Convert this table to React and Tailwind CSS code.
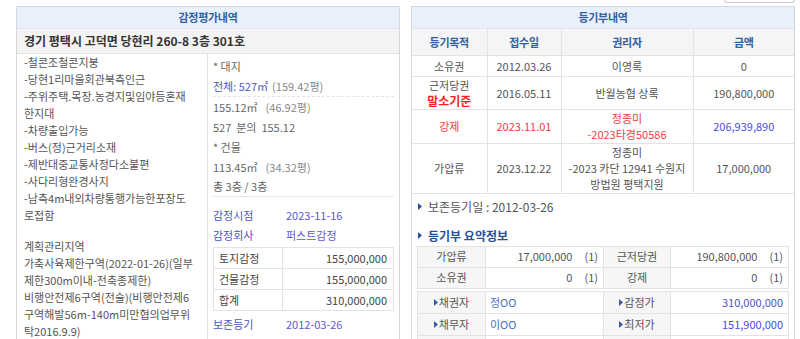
import React from 'react';

function Tri({ color = '#2b4f9c' }) {
  return (
    <svg width="4" height="7" viewBox="0 0 4 7" className="inline-block shrink-0">
      <path d="M0 0L4 3.5L0 7Z" fill={color} />
    </svg>
  );
}

const leftLines = [
  '-철콘조철콘지붕',
  '-당현1리마을회관북측인근',
  '-주위주택.목장.농경지및임야등혼재',
  '한지대',
  '-차량출입가능',
  '-버스(정)근거리소재',
  '-제반대중교통사정다소불편',
  '-사다리형완경사지',
  '-남측4m내외차량통행가능한포장도',
  '로접함',
];

const zoneLines = [
  '계획관리지역',
  '가축사육제한구역(2022-01-26)(일부',
  '제한300m이내-전축종제한)',
  '비행안전제6구역(전술)(비행안전제6',
  '구역해발56m-140m미만협의업무위',
  '탁2016.9.9)',
];

const registry = [
  { kind: '소유권', date: '2012.03.26', who: ['이영록'], amount: '0', h: 'h-[21px]' },
  { kind: '근저당권', base: true, date: '2016.05.11', who: ['반월농협 상록'], amount: '190,800,000', h: 'h-[33px]' },
  { kind: '강제', red: true, date: '2023.11.01', who: ['정종미', '-2023타경50586'], amount: '206,939,890', h: 'h-[34px]' },
  { kind: '가압류', date: '2023.12.22', who: ['정종미', '-2023 카단 12941 수원지', '방법원 평택지원'], amount: '17,000,000', h: 'h-[50px]' },
];

function AppraisalPanel() {
  return (
    <div className="w-[384px] border border-[#d3d8de] bg-white">
      <div className="h-[22px] bg-[#e8f1fb] border-b border-[#dfe5ec] flex items-center justify-center text-[11px] font-bold text-[#33609f] tracking-[-0.3px]">
        감정평가내역
      </div>
      <div className="h-[25px] bg-[#f3f3f3] border-b border-[#e3e3e3] flex items-center pl-[7px] text-[12px] font-bold text-[#333]">
        경기 평택시 고덕면 당현리 260-8 3층 301호
      </div>
      <div className="flex">
        <div className="w-[192px] border-r border-[#e3e3e3] pl-[7px] text-[11px] leading-[17px] text-[#555]">
          {leftLines.map((l) => (
            <div key={l} className="whitespace-nowrap">{l}</div>
          ))}
          <div className="mt-[14px]">
            {zoneLines.map((l) => (
              <div key={l} className="whitespace-nowrap">{l}</div>
            ))}
          </div>
        </div>
        <div className="flex-1 px-[5px] pt-[2px] text-[11px] text-[#666]">
          <div className="h-[20px] flex items-center">* 대지</div>
          <div className="h-[20px] flex items-center">
            <span className="text-[#4b56c0]">전체: 527㎡</span>
            <span className="ml-[4px] text-[#888]">(159.42평)</span>
          </div>
          <div className="border-b border-dashed border-[#e4e4e4]" />
          <div className="h-[20px] flex items-center">
            155.12㎡<span className="ml-[8px] text-[#888]">(46.92평)</span>
          </div>
          <div className="h-[20px] flex items-center">527 &nbsp;분의 &nbsp;155.12</div>
          <div className="h-[20px] flex items-center">* 건물</div>
          <div className="h-[20px] flex items-center">
            113.45㎡<span className="ml-[8px] text-[#888]">(34.32평)</span>
          </div>
          <div className="h-[20px] flex items-center border-b border-[#e6e6e6]">총 3층 / 3층</div>
          <div className="h-[20px] mt-[8px] flex items-center">
            <span className="w-[73px] text-[#4b56c0]">감정시점</span>
            <span className="text-[#5a5ad0]">2023-11-16</span>
          </div>
          <div className="h-[20px] flex items-center">
            <span className="w-[73px] text-[#4b56c0]">감정회사</span>
            <span className="text-[#5a5ad0]">퍼스트감정</span>
          </div>
          <table className="mt-[2px] w-[181px] table-fixed border-collapse text-[11px] text-[#444]">
            <colgroup>
              <col className="w-[69px]" />
              <col />
            </colgroup>
            <tbody>
              {[
                ['토지감정', '155,000,000'],
                ['건물감정', '155,000,000'],
                ['합계', '310,000,000'],
              ].map(([k, v]) => (
                <tr key={k} className="h-[21px]">
                  <td className="border border-[#e3e3e3] pl-[5px]">{k}</td>
                  <td className="border border-[#e3e3e3] pr-[6px] text-right">{v}</td>
                </tr>
              ))}
            </tbody>
          </table>
          <div className="h-[20px] mt-[3px] flex items-center">
            <span className="w-[73px] text-[#4b56c0]">보존등기</span>
            <span className="text-[#5a5ad0]">2012-03-26</span>
          </div>
        </div>
      </div>
    </div>
  );
}

function RegistryPanel() {
  return (
    <div className="w-[384px] border border-[#d3d8de] bg-white">
      <div className="h-[22px] bg-[#e8f1fb] border-b border-[#dfe5ec] flex items-center justify-center text-[11px] font-bold text-[#33609f] tracking-[-0.3px]">
        등기부내역
      </div>
      <table className="w-full table-fixed border-collapse text-[11px] leading-[16px] text-center text-[#555]">
        <colgroup>
          <col className="w-[75px]" />
          <col className="w-[74px]" />
          <col className="w-[132px]" />
          <col />
        </colgroup>
        <thead>
          <tr className="h-[26px] bg-[#f5f5f5] text-[#33609f] tracking-[-0.3px]">
            <th className="border-r border-b border-[#e3e3e3] font-bold">등기목적</th>
            <th className="border-r border-b border-[#e3e3e3] font-bold">접수일</th>
            <th className="border-r border-b border-[#e3e3e3] font-bold">권리자</th>
            <th className="border-b border-[#e3e3e3] font-bold">금액</th>
          </tr>
        </thead>
        <tbody>
          {registry.map((r) => (
            <tr key={r.kind} className={`${r.h} ${r.red ? 'text-[#f03c3c]' : ''}`}>
              <td className="border-r border-b border-[#e3e3e3]">
                <div>{r.kind}</div>
                {r.base && <div className="font-bold text-[#ff1e1e] text-[12px]">말소기준</div>}
              </td>
              <td className="border-r border-b border-[#e3e3e3]">{r.date}</td>
              <td className="border-r border-b border-[#e3e3e3]">
                {r.who.map((w) => (
                  <div key={w}>{w}</div>
                ))}
              </td>
              <td className={`border-b border-[#e3e3e3] ${r.red ? 'text-[#4a4ae6]' : ''}`}>{r.amount}</td>
            </tr>
          ))}
        </tbody>
      </table>

      <div className="px-[5px] text-[11px] text-[#555]">
        <div className="h-[26px] flex items-center gap-[6px] pl-[1px] text-[12px]">
          <Tri />
          <span>보존등기일 : 2012-03-26</span>
        </div>
        <div className="h-[20px] mt-[6px] flex items-center gap-[6px] pl-[1px] text-[12px] font-bold text-[#2b4f9c]">
          <Tri />
          <span>등기부 요약정보</span>
        </div>

        <table className="w-full table-fixed border-collapse">
          <colgroup>
            <col className="w-[68px]" />
            <col className="w-[118px]" />
            <col className="w-[67px]" />
            <col />
          </colgroup>
          <tbody>
            {[
              ['가압류', '17,000,000', '근저당권', '190,800,000'],
              ['소유권', '0', '강제', '0'],
            ].map(([a, b, c, d]) => (
              <tr key={a} className="h-[21px]">
                <td className="border border-[#e3e3e3] bg-[#f6f6f6] text-center">{a}</td>
                <td className="border border-[#e3e3e3] text-right pr-[5px]">
                  {b}<span className="ml-[12px]">(1)</span>
                </td>
                <td className="border border-[#e3e3e3] bg-[#f6f6f6] text-center">{c}</td>
                <td className="border border-[#e3e3e3] text-right pr-[5px]">
                  {d}<span className="ml-[12px]">(1)</span>
                </td>
              </tr>
            ))}
          </tbody>
        </table>

        <table className="mt-[2px] w-full table-fixed border-collapse">
          <colgroup>
            <col className="w-[68px]" />
            <col className="w-[118px]" />
            <col className="w-[67px]" />
            <col />
          </colgroup>
          <tbody>
            {[
              ['채권자', '정OO', '감정가', '310,000,000', 'text-[#4f4fcc]'],
              ['채무자', '이OO', '최저가', '151,900,000', 'text-[#4747ee]'],
              ['', '', '', '', ''],
            ].map(([a, b, c, d, tone], i) => (
              <tr key={i} className="h-[22px]">
                <td className="border border-[#e3e3e3] bg-[#f6f6f6]">
                  {a && (
                    <div className="flex items-center justify-center gap-[1px]">
                      <Tri color="#3a5aa8" />
                      <span>{a}</span>
                    </div>
                  )}
                </td>
                <td className="border border-[#e3e3e3] pl-[4px] text-[#4a70c0]">{b}</td>
                <td className="border border-[#e3e3e3] bg-[#f6f6f6]">
                  {c && (
                    <div className="flex items-center justify-center gap-[1px]">
                      <Tri color="#3a5aa8" />
                      <span>{c}</span>
                    </div>
                  )}
                </td>
                <td className={`border border-[#e3e3e3] text-right pr-[5px] ${tone}`}>{d}</td>
              </tr>
            ))}
          </tbody>
        </table>
      </div>
    </div>
  );
}

export default function App() {
  return (
    <div className="w-[800px] h-[339px] overflow-hidden bg-white font-['Noto_Sans_CJK_KR','Noto_Sans',sans-serif]">
      <div className="h-[6px] flex justify-end pr-[5px]">
        <div className="w-[71px] h-[3px] border-x border-b border-[#c9c9c9] rounded-b-[3px]" />
      </div>
      <div className="flex items-start gap-[11px] pl-[16px]">
        <AppraisalPanel />
        <RegistryPanel />
      </div>
    </div>
  );
}
